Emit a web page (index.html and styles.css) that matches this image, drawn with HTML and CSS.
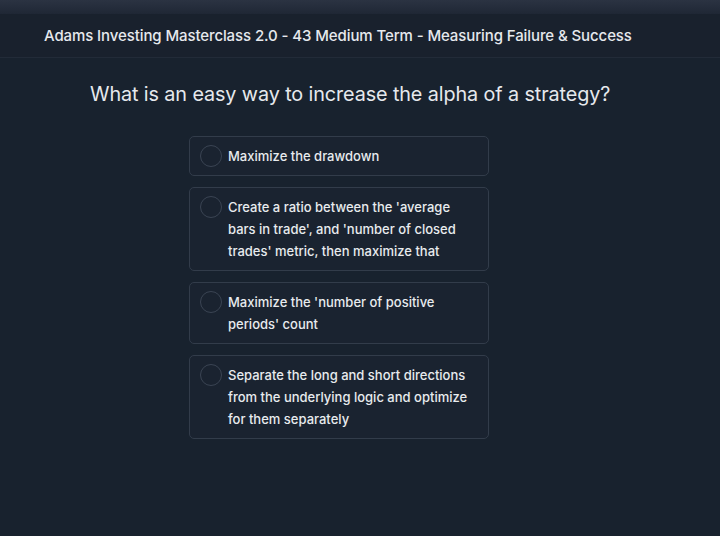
FILE: index.html
```html
<!DOCTYPE html>
<html lang="en">
<head>
    <meta charset="UTF-8">
    <title>Quiz</title>
    <link rel="stylesheet" href="styles.css">
</head>
<body>
    <div class="topbar"></div>
    <div class="header">
        <h1 class="course-title">Adams Investing Masterclass 2.0 - 43 Medium Term - Measuring Failure &amp; Success</h1>
    </div>
    <div class="quiz">
        <h2 class="question">What is an easy way to increase the alpha of a strategy?</h2>
        <ul class="answers">
            <li class="answer">
                <span class="radio"></span>
                <span class="answer-text">Maximize the drawdown</span>
            </li>
            <li class="answer">
                <span class="radio"></span>
                <span class="answer-text">Create a ratio between the 'average bars in trade', and 'number of closed trades' metric, then maximize that</span>
            </li>
            <li class="answer">
                <span class="radio"></span>
                <span class="answer-text">Maximize the 'number of positive periods' count</span>
            </li>
            <li class="answer">
                <span class="radio"></span>
                <span class="answer-text">Separate the long and short directions from the underlying logic and optimize for them separately</span>
            </li>
        </ul>
    </div>
</body>
</html>
```

FILE: styles.css
```css
* {
    margin: 0;
    padding: 0;
    box-sizing: border-box;
}
ul li {
    list-style: none;
}
html, body {
    height: 100%;
}
body {
    background: #18222e;
    color: #e6e9ed;
    font-family: Inter, "Noto Sans", sans-serif;
}
.topbar {
    height: 14px;
    background: linear-gradient(#2b3342, #1f2735);
}
.header {
    height: 44px;
    padding-left: 44px;
    display: flex;
    align-items: center;
    background: #19212d;
    border-bottom: 1px solid #222b38;
}
.course-title {
    font-size: 15px;
    font-weight: 500;
    letter-spacing: -0.1px;
}
.quiz {
    padding: 24px 0 0 90px;
}
.question {
    font-size: 19.8px;
    font-weight: 400;
    letter-spacing: -0.1px;
}
.answers {
    width: 300px;
    margin: 30px 0 0 99px;
    display: flex;
    flex-direction: column;
    gap: 11px;
}
.answer {
    display: flex;
    gap: 6px;
    padding: 8px 10px;
    background: #1a2330;
    border: 1px solid #323c4a;
    border-radius: 5px;
}
.radio {
    flex: none;
    width: 22px;
    height: 22px;
    border: 1.5px solid #3a4453;
    border-radius: 50%;
}
.answer-text {
    font-size: 13px;
    line-height: 22px;
    font-weight: 500;
    color: #e8ebee;
}
```
